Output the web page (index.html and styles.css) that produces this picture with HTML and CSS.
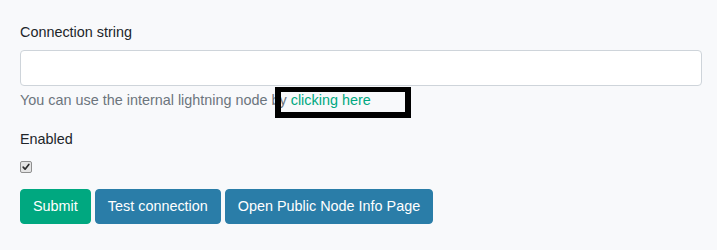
FILE: index.html
```html
<!DOCTYPE html>
<html>
<head>
<meta charset="utf-8">
<link rel="stylesheet" href="styles.css">
</head>
<body>
<div class="page">
  <div class="form-group first">
    <label class="label">Connection string</label>
    <input class="input" type="text">
    <small class="help">You can use the internal lightning node by <a class="link" href="#">clicking here</a><span class="highlight"></span></small>
  </div>
  <div class="form-group second">
    <label class="label label-tight">Enabled</label>
    <div class="check-row">
      <span class="check" role="checkbox" aria-checked="true">
        <svg width="12" height="12" viewBox="0 0 12 12"><path d="M2.6 6.2 L4.9 8.6 L9.4 2.9" fill="none" stroke="#2b2b2b" stroke-width="2" stroke-linecap="round" stroke-linejoin="round"/></svg>
      </span>
    </div>
  </div>
  <div class="buttons">
    <button class="btn btn-green">Submit</button>
    <button class="btn btn-blue">Test connection</button>
    <button class="btn btn-blue">Open Public Node Info Page</button>
  </div>
</div>
</body>
</html>
```

FILE: styles.css
```css
html, body {
  margin: 0;
  padding: 0;
  background: #f8f9fb;
}
body {
  font-family: "Liberation Sans", Arial, sans-serif;
  font-size: 14.4px;
  line-height: 1.5;
  color: #212529;
}
.page {
  padding: 22px 15px 0 20px;
}
.form-group.first {
  margin-bottom: 18px;
}
.form-group.second {
  margin-bottom: 12px;
}
.label {
  display: block;
  margin-bottom: 6px;
}
.label-tight {
  margin-bottom: 6px;
}
.input {
  display: block;
  box-sizing: border-box;
  width: 100%;
  height: 36px;
  padding: 6px 12px;
  font: inherit;
  background: #fff;
  border: 1px solid #ced4da;
  border-radius: 4px;
  margin: 0;
}
.help {
  position: relative;
  display: block;
  margin-top: 4px;
  font-size: 14.4px;
  color: #6c757d;
}
.link {
  color: #00a880;
  text-decoration: none;
}
.highlight {
  position: absolute;
  left: 255px;
  top: -3px;
  width: 124px;
  height: 20px;
  border-style: solid;
  border-color: #000;
  border-width: 5px 6px 6px 6px;
}
.check-row {
  height: 20px;
  display: flex;
  align-items: center;
}
.check {
  display: flex;
  align-items: center;
  justify-content: center;
  box-sizing: border-box;
  width: 12px;
  height: 12px;
  background: #e4e4e4;
  border: 1px solid #8f8f8f;
  border-radius: 2px;
}
.check svg {
  display: block;
}
.buttons {
  display: flex;
  gap: 4px;
}
.btn {
  font: inherit;
  color: #fff;
  padding: 6px 12px;
  border: 1px solid transparent;
  border-radius: 4px;
  line-height: 1.5;
}
.btn-green {
  background: #00a880;
  border-color: #00a880;
}
.btn-blue {
  background: #2a7da8;
  border-color: #2a7da8;
}
```
